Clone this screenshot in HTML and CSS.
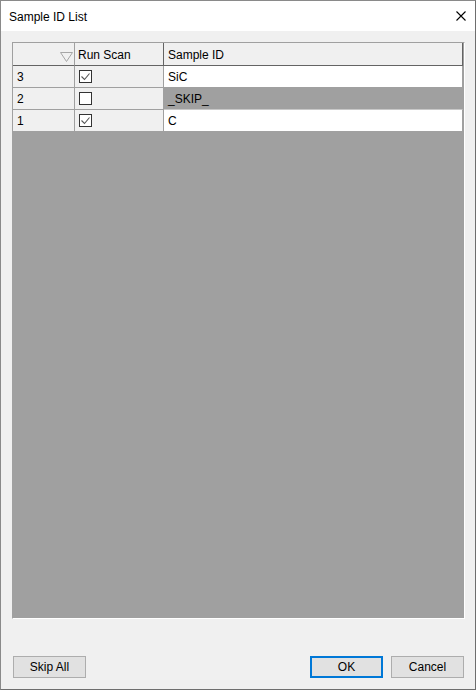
FILE: index.html
```html
<!DOCTYPE html>
<html lang="en">
<head>
<meta charset="utf-8">
<title>Sample ID List</title>
<link rel="stylesheet" href="styles.css">
</head>
<body>
<div class="window">
  <div class="titlebar">
    <span class="title">Sample ID List</span>
    <svg class="close" width="10" height="10" viewBox="0 0 10 10"><path d="M0.5 0.5L9.5 9.5M9.5 0.5L0.5 9.5" stroke="#000" stroke-width="1.1" fill="none"/></svg>
  </div>
  <div class="content">
    <div class="grid">
      <div class="row header">
        <div class="cell rowhead corner">
          <svg class="sort" width="13" height="10" viewBox="0 0 13 10"><path d="M0.5 0.5H12.5L6.5 9.5Z" stroke="#a6a6a6" stroke-width="1" fill="none"/></svg>
        </div>
        <div class="cell check-col">Run Scan</div>
        <div class="cell id-col">Sample ID</div>
      </div>
      <div class="row">
        <div class="cell rowhead">3</div>
        <div class="cell check-col"><span class="checkbox"><svg width="11" height="11" viewBox="0 0 11 11"><path d="M1.5 5.5L4.5 8.5L9.5 2.5" stroke="#555" stroke-width="1.1" fill="none"/></svg></span></div>
        <div class="cell id-col">SiC</div>
      </div>
      <div class="row">
        <div class="cell rowhead">2</div>
        <div class="cell check-col"><span class="checkbox"></span></div>
        <div class="cell id-col skip">_SKIP_</div>
      </div>
      <div class="row">
        <div class="cell rowhead">1</div>
        <div class="cell check-col"><span class="checkbox"><svg width="11" height="11" viewBox="0 0 11 11"><path d="M1.5 5.5L4.5 8.5L9.5 2.5" stroke="#555" stroke-width="1.1" fill="none"/></svg></span></div>
        <div class="cell id-col">C</div>
      </div>
    </div>
    <div class="footer">
      <button class="btn">Skip All</button>
      <div class="spacer"></div>
      <button class="btn default">OK</button>
      <button class="btn">Cancel</button>
    </div>
  </div>
</div>
</body>
</html>
```
FILE: styles.css
```css
html, body {
  margin: 0;
  padding: 0;
  background: #4a4a4a;
}
body {
  font-family: "Liberation Sans", Arial, sans-serif;
  font-size: 12px;
  color: #000;
}
.window {
  width: 476px;
  height: 690px;
  box-sizing: border-box;
  border: 1px solid #8a8a8a;
  border-right-color: #6e6e6e;
  border-bottom-color: #6e6e6e;
  background: #f0f0f0;
  display: flex;
  flex-direction: column;
}
.titlebar {
  height: 30px;
  background: #fff;
  display: flex;
  align-items: center;
  padding-left: 8px;
  padding-right: 9px;
  flex: none;
}
.title {
  flex: 1;
  padding-top: 1px;
}
.close {
  display: block;
}
.content {
  flex: 1;
  display: flex;
  flex-direction: column;
  padding: 11px 10px 11px 11px;
}
.grid {
  flex: 1;
  background: #a0a0a0;
  border-top: 1px solid #a0a0a0;
  border-left: 1px solid #a0a0a0;
  border-right: 1px solid #fff;
  border-bottom: 1px solid #fff;
  display: flex;
  flex-direction: column;
}
.row {
  display: grid;
  grid-template-columns: 62px 89px 299px;
  height: 22px;
}
.row.header {
  height: 23px;
}
.cell {
  box-sizing: border-box;
  border-right: 1px solid #a0a0a0;
  border-bottom: 1px solid #a0a0a0;
  display: flex;
  align-items: center;
  padding-left: 4px;
  padding-top: 1px;
  background: #fff;
  white-space: nowrap;
}
.rowhead {
  background: #f0f0f0;
}
.check-col {
  background: #f0f0f0;
}
.header .cell {
  background: #f0f0f0;
  border-right-color: #646464;
  border-bottom-color: #646464;
  padding-left: 3px;
}
.header .id-col {
  padding-left: 4px;
}
.header .corner {
  justify-content: flex-end;
  padding-right: 1px;
  border-right-color: #a0a0a0;
}
.sort {
  display: block;
  margin-top: 4px;
}
.skip {
  background: #a0a0a0;
  border-bottom-color: #c8c8c8;
}
.checkbox {
  box-sizing: border-box;
  width: 13px;
  height: 13px;
  border: 1px solid #333;
  background: #fff;
  display: flex;
  align-items: center;
  justify-content: center;
  margin-top: -1px;
}
.checkbox svg {
  display: block;
}
.footer {
  flex: none;
  display: flex;
  align-items: center;
  margin-top: 37px;
  padding-left: 1px;
  padding-right: 1px;
  gap: 8px;
}
.spacer {
  flex: 1;
}
.btn {
  box-sizing: border-box;
  width: 73px;
  height: 22px;
  border: 1px solid #adadad;
  background: #e1e1e1;
  font-family: "Liberation Sans", Arial, sans-serif;
  font-size: 12px;
  color: #000;
  padding: 0;
  margin: 0;
}
.btn.default {
  border: 2px solid #0078d7;
}
```
